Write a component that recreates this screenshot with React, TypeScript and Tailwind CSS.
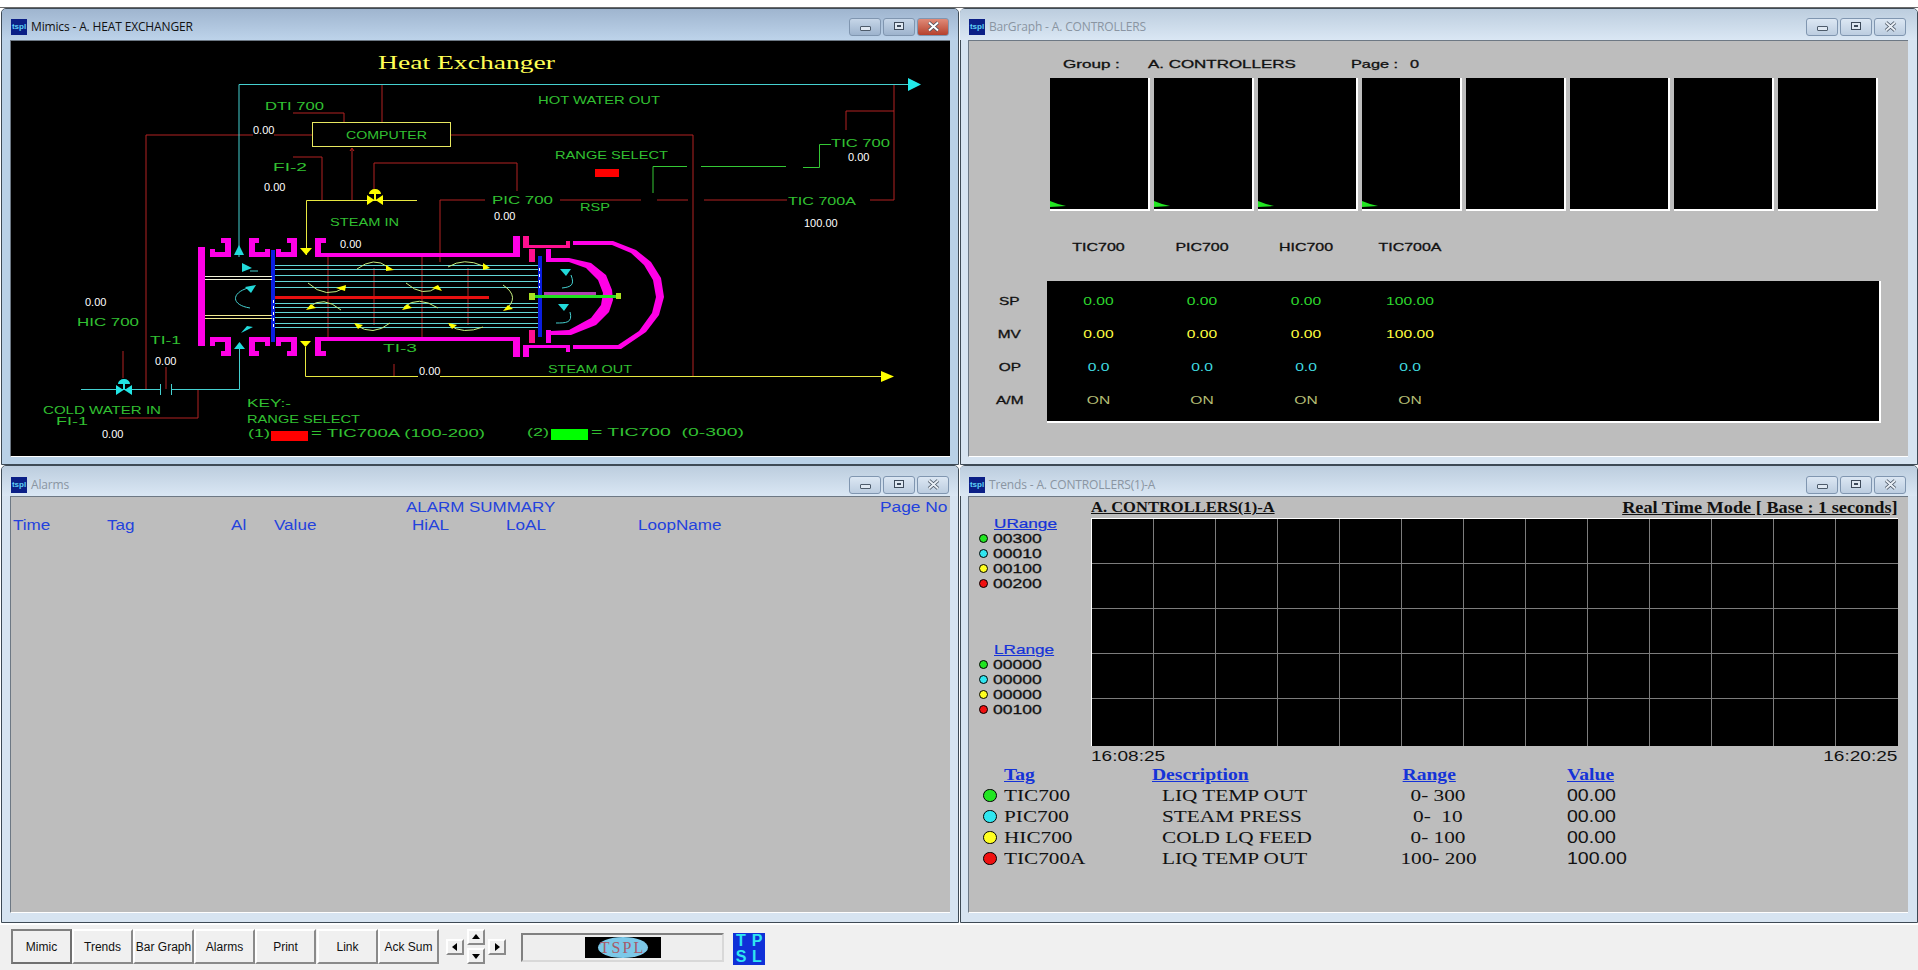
import type { ReactNode } from "react";

const SANS = "'Liberation Sans', Arial, sans-serif";

function Icon() {
  return (
    <div className="flex h-4 w-4 shrink-0 items-center justify-center overflow-hidden bg-[#0b1f86] font-['Liberation_Sans',sans-serif] text-[8px] font-bold leading-none text-[#5fd0f5]">
      tspl
    </div>
  );
}

function WinButtons({ active, close }: { active?: boolean; close?: boolean }) {
  const box = "flex h-[18px] w-[32px] items-center justify-center rounded-[3px] border border-[#8096b0] bg-gradient-to-b";
  const tone = active ? "from-[#c6d6e8] to-[#9db3cd]" : "from-[#dce7f3] to-[#bccde0]";
  return (
    <div className="flex gap-[2px]">
      <div className={`${box} ${tone}`}>
        <div className="mt-[4px] h-[5px] w-[11px] rounded-[1px] border border-[#4d5b6b] bg-[#dfe8f2]" />
      </div>
      <div className={`${box} ${tone}`}>
        <div className="mb-[1px] flex h-[8px] w-[10px] items-center justify-center border border-[#3d4a5a] bg-[#dfe8f2]">
          <div className="h-[2px] w-[4px] bg-[#3d4a5a]" />
        </div>
      </div>
      <div className={`${box} ${close ? "from-[#e08a78] to-[#b5402c]" : tone}`}>
        <svg width="13" height="11" viewBox="0 0 13 11">
          <path d="M2 1.500L11 9.500M11 1.500L2 9.500" stroke="#44505e" strokeWidth="3.600" />
          <path d="M2 1.500L11 9.500M11 1.500L2 9.500" stroke={close ? "#fff" : "#e8eef5"} strokeWidth="2" />
        </svg>
      </div>
    </div>
  );
}

function Window({
  title,
  active,
  right,
  lower,
  children,
}: {
  title: string;
  active?: boolean;
  right?: boolean;
  lower?: boolean;
  children: ReactNode;
}) {
  return (
    <div
      className={`flex w-[958px] flex-col rounded-t-[5px] border border-[#3e4a55] ${
        active ? "bg-[#b9d1e7]" : "bg-[#d7e4f1]"
      } ${right ? "pl-[7px] pr-[8px]" : "pl-[8px] pr-[8px]"} ${lower ? "h-[458px]" : "h-[457px]"}`}
    >
      <div
        className={`-mx-2 flex shrink-0 items-center justify-between rounded-t-[4px] bg-gradient-to-b pl-[9px] ${
          right ? "pr-[11px]" : "pr-[9px]"
        } ${active ? "from-[#9fb5cf] to-[#bdd3ea]" : "from-[#bccdde] to-[#dae7f4]"} ${lower ? "h-[30px] pt-[7px]" : "h-[31px] pt-[4px]"}`}
      >
        <div className="flex items-center gap-[4px]">
          <Icon />
          <span
            className={`font-['Open_Sans',sans-serif] text-[12px] tracking-[-0.15px] ${
              active ? "text-[#111]" : "text-[#8a95a2]"
            }`}
          >
            {title}
          </span>
        </div>
        <WinButtons active={active} close={active} />
      </div>
      <div className="h-[417px] w-[940px] shrink-0 overflow-hidden border-t border-l border-[#6d7884] border-b border-b-white">
        {children}
      </div>
    </div>
  );
}

function T({ x, y, w, children, c = "#32c032", s = 11 }: { x: number; y: number; w: number; children: string; c?: string; s?: number }) {
  return (
    <text x={x} y={y} fontFamily={SANS} fontSize={s} fill={c} textLength={w} lengthAdjust="spacingAndGlyphs" xmlSpace="preserve">
      {children}
    </text>
  );
}

function V({ x, y, children }: { x: number; y: number; children: string }) {
  return (
    <text x={x} y={y} fontFamily={SANS} fontSize={11} fill="#fff">
      {children}
    </text>
  );
}

const redLines = [
  "M381 84V122",
  "M292 113H343V122",
  "M145 389V135H252M273 135H311",
  "M450 135H692V376",
  "M292 157H321V200",
  "M351 200V149",
  "M373 190V163H516V191",
  "M439 262V200H484",
  "M559 200H640M656 200H687M703 200H786M869 200H893V84M845 130V111H893",
  "M122 351V378M165 367V389M197 389V418H118M393 364V376",
  "M327 257V337M373 268V325M421 257V337M467 268V325",
];

const tubes = [265, 269, 275, 281, 287, 303, 307, 312, 317, 323, 327];

const flowArcs = [
  "M356 269Q373 256 387 267",
  "M307 283Q325 300 345 287",
  "M447 267Q463 257 482 266",
  "M405 283Q422 298 437 287",
  "M340 310Q322 295 308 307",
  "M437 308Q417 295 403 307",
  "M389 323Q372 337 355 325",
  "M482 327Q462 335 448 325",
  "M502 285Q520 297 504 310",
];

const flowHeads = [
  "385,265 393,270 385,271",
  "345,285 344,291 335,288",
  "482,263 489,268 482,270",
  "437,285 441,291 431,288",
  "305,310 310,304 315,308",
  "401,310 406,304 411,308",
  "353,323 362,325 357,329",
  "447,323 456,325 451,329",
  "502,311 507,305 512,309",
];

function Mimic() {
  return (
    <svg width="940" height="416" viewBox="10 41 940 416" className="block bg-black">
      <text x="377" y="69" fontFamily="'Liberation Serif', serif" fontSize="19" fill="#ffff55" textLength="177" lengthAdjust="spacingAndGlyphs">
        Heat Exchanger
      </text>

      {redLines.map((d) => (
        <path key={d} d={d} fill="none" stroke="#b22222" strokeWidth="1" />
      ))}
      <path d="M349 151L351 148L353 151" fill="none" stroke="#c02020" />

      <path d="M238 257V84.500H908" fill="none" stroke="#45d0d0" />
      <polygon points="907,78 920,84.500 907,91" fill="#22eaea" />
      <path d="M80 389.500H159M170 389.500H238.500V349M159.500 384V395M170.500 384V395" fill="none" stroke="#45d0d0" />
      <polygon points="238,245 233,255 243,255" fill="#22dada" />
      <polygon points="238.500,342 233,349 244,349" fill="#22dada" />

      <rect x="311.500" y="122.500" width="138" height="24" fill="none" stroke="#e8e860" />
      <path d="M305.500 255V200.500H416M304.500 347V376.500H417M439 376.500H880" fill="none" stroke="#e8e840" />
      <polygon points="299,248 311,248 305,255" fill="#ffff00" />
      <polygon points="299,341 310,341 304.500,347" fill="#ffff00" />
      <polygon points="880,371 893,376.500 880,382" fill="#ffff00" />

      <path d="M652 193V166.500H686M700 166.500H785M802 167.500H818.500V144.500H830" fill="none" stroke="#35c835" />
      <rect x="594" y="169" width="24" height="8" fill="#ff0000" />
      <rect x="270" y="431" width="37" height="10" fill="#ff0000" />
      <rect x="550" y="429" width="37" height="11" fill="#00ff00" />

      {/* valves */}
      <path d="M366 195L373.500 200L366 205ZM382 195L374.500 200L382 205ZM373 200H375V194H373ZM368 194A6 5 0 0 1 380 194Z" fill="#ffff00" />
      <path d="M115 385L122.500 390L115 395ZM131 385L123.500 390L131 395ZM122 390H124V384H122ZM117 384A6 5 0 0 1 129 384Z" fill="#22e6e6" />

      {/* flanges and shell */}
      <g fill="#ff00e6">
        <rect x="197" y="247" width="7" height="99" />
        <polygon points="220,238 230,238 230,257 209,257 209,249 214,249 214,252 224,252 224,243 220,243" />
        <polygon points="248,238 258,238 258,243 254,243 254,252 264,252 264,249 269,249 269,257 248,257" />
        <polygon points="286,238 296,238 296,257 275,257 275,249 280,249 280,252 290,252 290,243 286,243" />
        <polygon points="314,238 325,238 325,243 320,243 320,253 512,253 512,236 519,236 519,257 314,257" />
        <polygon points="209,337 230,337 230,356 220,356 220,351 224,351 224,342 214,342 214,346 209,346" />
        <polygon points="248,337 269,337 269,346 264,346 264,342 254,342 254,351 258,351 258,356 248,356" />
        <polygon points="275,337 296,337 296,356 286,356 286,351 290,351 290,342 280,342 280,346 275,346" />
        <polygon points="314,337 519,337 519,357 512,357 512,341 320,341 320,351 325,351 325,356 314,356" />
        <polygon points="522,236 528,236 528,245 565,245 565,241 569,241 569,248 522,248" fill="#ff1090" />
        <polygon points="522,345 569,345 569,352 565,352 565,348 528,348 528,357 522,357" />
        <rect x="528" y="249" width="6" height="13" fill="#ff1090" />
        <rect x="528" y="330" width="6" height="13" fill="#ff1090" />
        <rect x="545" y="249" width="5" height="13" />
        <rect x="545" y="330" width="5" height="13" />
        <polygon points="572,241 612,241 635,250 650,262 660,278 663,297 658,315 645,332 620,349 572,349 572,345 617,345 638,331 651,313 655,297 652,280 643,265 630,253 611,245 572,245" />
        <polygon points="550,258 568,258 590,263 605,275 611,290 612,300 608,312 595,325 570,335 550,335 550,331 568,330 590,318 600,305 602,293 597,280 585,268 568,262 550,262" />
      </g>

      {tubes.map((y) => (
        <path key={y} d={`M272 ${y}.5H540`} stroke="#62d6d6" />
      ))}
      <rect x="273" y="296" width="215" height="3" fill="#e81010" />
      <rect x="270" y="250" width="4" height="92" fill="#0a1ee0" />
      <rect x="537" y="256" width="4" height="81" fill="#0a1ee0" />
      <path d="M204 276.500H271M204 279.500H271" stroke="#f0f0d8" />
      <path d="M204 315.500H271M204 318.500H271" stroke="#f0e890" />
      <path d="M272.500 300V330M538.500 268V288" stroke="#fff" strokeDasharray="3 3" />

      {flowArcs.map((d) => (
        <path key={d} d={d} fill="none" stroke="#c8f080" />
      ))}
      {flowHeads.map((p) => (
        <polygon key={p} points={p} fill="#ffff00" />
      ))}

      {/* cyan flow marks */}
      <g fill="#22dada">
        <polygon points="241,263 251,268 241,272" />
        <polygon points="244,287 255,285 250,293" />
        <polygon points="240,333 246,326 252,327" />
        <polygon points="559,269 570,269 565,276" />
        <polygon points="557,304 568,304 563,311" />
      </g>
      <g fill="none" stroke="#45d0d0">
        <path d="M249 271H257" />
        <path d="M247 288C230 293 230 305 249 308" />
        <path d="M570 275C574 285 570 287 561 288" />
        <path d="M569 312C572 323 565 323 555 323" />
      </g>

      <rect x="543" y="292" width="52" height="4" fill="#b040b0" />
      <rect x="530" y="295" width="90" height="3" fill="#20e020" />
      <rect x="528" y="293" width="6" height="7" fill="#a8e020" />
      <rect x="615" y="293" width="5" height="6" fill="#a8e020" />

      <T x={264} y={110} w={59}>DTI 700</T>
      <T x={345} y={139} w={81}>COMPUTER</T>
      <T x={272} y={171} w={34}>FI-2</T>
      <T x={329} y={226} w={69}>STEAM IN</T>
      <T x={537} y={104} w={122}>HOT WATER OUT</T>
      <T x={554} y={159} w={113}>RANGE SELECT</T>
      <T x={491} y={204} w={61}>PIC 700</T>
      <T x={579} y={211} w={30}>RSP</T>
      <T x={830} y={147} w={59}>TIC 700</T>
      <T x={787} y={205} w={68}>TIC 700A</T>
      <T x={76} y={326} w={62}>HIC 700</T>
      <T x={149} y={344} w={31}>TI-1</T>
      <T x={382} y={352} w={34}>TI-3</T>
      <T x={42} y={414} w={118}>COLD WATER IN</T>
      <T x={55} y={425} w={32}>FI-1</T>
      <T x={547} y={373} w={84}>STEAM OUT</T>
      <T x={246} y={407} w={44}>KEY:-</T>
      <T x={246} y={423} w={113}>RANGE SELECT</T>
      <T x={247} y={437} w={22}>(1)</T>
      <T x={310} y={437} w={174}>= TIC700A (100-200)</T>
      <T x={526} y={436} w={22}>(2)</T>
      <T x={590} y={436} w={153}>= TIC700  (0-300)</T>

      <V x={252} y={134}>0.00</V>
      <V x={263} y={191}>0.00</V>
      <V x={493} y={220}>0.00</V>
      <V x={847} y={161}>0.00</V>
      <V x={803} y={227}>100.00</V>
      <V x={339} y={248}>0.00</V>
      <V x={84} y={306}>0.00</V>
      <V x={154} y={365}>0.00</V>
      <V x={101} y={438}>0.00</V>
      <V x={418} y={375}>0.00</V>
    </svg>
  );
}

function Alarms() {
  return (
    <div className="h-full bg-[#bdbdbd] font-['Liberation_Sans',sans-serif] text-[14px] leading-[18px] text-[#2342dd]">
      <div className="relative h-[19px]">
        <span className="absolute left-[395px] top-[1px] inline-block origin-left scale-x-[1.21]">ALARM SUMMARY</span>
        <span className="absolute right-[3px] top-[1px] inline-block origin-right scale-x-[1.24]">Page No</span>
      </div>
      <div className="grid grid-cols-[94px_124px_43px_138px_94px_132px_1fr] pl-[2px]">
        {["Time", "Tag", "Al", "Value", "HiAL", "LoAL", "LoopName"].map((h) => (
          <span key={h} className="inline-block origin-left scale-x-[1.22]">{h}</span>
        ))}
      </div>
    </div>
  );
}

const barColumns = ["TIC700", "PIC700", "HIC700", "TIC700A"];
const bars = [true, true, true, true, false, false, false, false];
const barRows = [
  { label: "SP", color: "text-[#2ed82e]", values: ["0.00", "0.00", "0.00", "100.00"] },
  { label: "MV", color: "text-[#ffff40]", values: ["0.00", "0.00", "0.00", "100.00"] },
  { label: "OP", color: "text-[#40dce0]", values: ["0.0", "0.0", "0.0", "0.0"] },
  { label: "A/M", color: "text-[#b4bc74]", values: ["ON", "ON", "ON", "ON"] },
];

function BarGraph() {
  const ink = "inline-block [-webkit-text-stroke:0.3px_#111]";
  return (
    <div className="h-full bg-[#bdbdbd] font-['Liberation_Sans',sans-serif] text-[11px] leading-[14px] text-[#111]">
      <div className="relative h-[30px]">
        <span className={`${ink} absolute left-[94px] top-[16px] origin-left scale-x-[1.55]`}>Group :</span>
        <span className={`${ink} absolute left-[179px] top-[16px] origin-left scale-x-[1.54]`}>A. CONTROLLERS</span>
        <span className={`${ink} absolute left-[382px] top-[16px] origin-left scale-x-[1.48]`}>Page :</span>
        <span className={`${ink} absolute left-[441px] top-[16px] origin-left scale-x-[1.48]`}>0</span>
      </div>
      <div className="mt-[7px] flex gap-[4px] pl-[81px]">
        {bars.map((on, i) => (
          <div key={i} className="relative h-[133px] w-[100px] border-b-2 border-r-2 border-white bg-black">
            {on && (
              <svg width="17" height="6" viewBox="0 0 17 6" className="absolute bottom-[2px] left-0">
                <polygon points="0,0 8,3 16,5 0,6" fill="#22e622" />
              </svg>
            )}
          </div>
        ))}
      </div>
      <div className="mt-[29px] grid h-[14px] grid-cols-[103px_104px_104px_104px] pl-[78px] text-center">
        {barColumns.map((c) => (
          <span key={c} className={`${ink} scale-x-[1.45]`}>{c}</span>
        ))}
      </div>
      <div className="mt-[27px] flex">
        <div className="w-[78px] pl-[3px] pt-[3px] text-center">
          {barRows.map((r) => (
            <div key={r.label} className="flex h-[33px] items-center justify-center">
              <span className={`${ink} scale-x-[1.4]`}>{r.label}</span>
            </div>
          ))}
        </div>
        <div className="h-[142px] w-[834px] border-b-2 border-r-2 border-white bg-black pt-[3px]">
          {barRows.map((r) => (
            <div key={r.label} className={`grid h-[33px] grid-cols-[103px_104px_104px_104px] items-center text-center ${r.color}`}>
              {r.values.map((v, i) => (
                <span key={i} className="inline-block scale-x-[1.42]">{v}</span>
              ))}
            </div>
          ))}
        </div>
      </div>
    </div>
  );
}

function Dot({ color }: { color: string }) {
  return <span className={`h-[9px] w-[9px] rounded-full border border-black ${color}`} />;
}

const dotColors = ["bg-[#22e622]", "bg-[#30e6f0]", "bg-[#ffff20]", "bg-[#f01010]"];

function RangeBlock({ name, values, className }: { name: string; values: string[]; className?: string }) {
  return (
    <div className={className}>
      <div className="h-[15px] pl-[25px] leading-[15px]">
        <span className="inline-block origin-left scale-x-[1.32] text-[#1533d8] underline [-webkit-text-stroke:0.2px_#1533d8]">{name}</span>
      </div>
      {values.map((v, i) => (
        <div key={i} className="flex h-[15px] items-center gap-[5px] pl-[10px]">
          <Dot color={dotColors[i]} />
          <span className="inline-block origin-left scale-x-[1.35] text-[#111] [-webkit-text-stroke:0.3px_#111]">{v}</span>
        </div>
      ))}
    </div>
  );
}

const trendRows = [
  { tag: "TIC700", desc: "LIQ TEMP OUT", range: "0- 300", value: "00.00", dot: "bg-[#22e622]" },
  { tag: "PIC700", desc: "STEAM PRESS", range: "0-  10", value: "00.00", dot: "bg-[#30e6f0]" },
  { tag: "HIC700", desc: "COLD LQ FEED", range: "0- 100", value: "00.00", dot: "bg-[#ffff20]" },
  { tag: "TIC700A", desc: "LIQ TEMP OUT", range: "100- 200", value: "100.00", dot: "bg-[#f01010]" },
];

const cells = Array.from({ length: 65 }, (_, i) => i);

function Trends() {
  const head = "inline-block origin-left scale-x-[1.15] font-bold text-[#1533d8] underline";
  const cell = "inline-block origin-left scale-x-[1.25]";
  return (
    <div className="h-full bg-[#bdbdbd] font-['Liberation_Serif',serif] text-[#111]">
      <div className="flex h-[21px] items-center justify-between pl-[122px] pr-[10px] text-[14px] font-bold underline">
        <span className="inline-block origin-left scale-x-[1.18]">A. CONTROLLERS(1)-A</span>
        <span className="inline-block origin-right scale-x-[1.14] text-[16px]">Real Time Mode [ Base : 1 seconds]</span>
      </div>
      <div className="flex">
        <div className="w-[122px] font-['Liberation_Sans',sans-serif] text-[13px]">
          <RangeBlock name="URange" values={["00300", "00010", "00100", "00200"]} className="-mt-[2px]" />
          <RangeBlock name="LRange" values={["00000", "00000", "00000", "00100"]} className="mt-[51px]" />
        </div>
        <div className="grid h-[228px] w-[807px] grid-cols-[repeat(13,62px)] grid-rows-[45px_45px_45px_45px_47px] border-l border-t border-white bg-black">
          {cells.map((i) => (
            <div
              key={i}
              className={`border-[#7c7c7c] ${i % 13 < 12 ? "border-r" : ""} ${i < 52 ? "border-b" : ""}`}
            />
          ))}
        </div>
      </div>
      <div className="flex h-[20px] items-center justify-between pl-[122px] pr-[11px] font-['Liberation_Sans',sans-serif] text-[15px]">
        <span className="inline-block origin-left scale-x-[1.27]">16:08:25</span>
        <span className="inline-block origin-right scale-x-[1.27]">16:20:25</span>
      </div>
      <div className="-mt-[2px] grid grid-cols-[35px_148px_246px_80px_89px_1fr] text-[17px] leading-[21px]">
        <span />
        <span className={head}>Tag</span>
        <span className={head}>Description</span>
        <span className={`${head} pl-[4px]`}>Range</span>
        <span />
        <span className={head}>Value</span>
        {trendRows.map((r) => (
          <div key={r.tag} className="contents">
            <span className="flex items-center pl-[14px]">
              <span className={`h-[13px] w-[14px] rounded-full border border-black ${r.dot}`} />
            </span>
            <span className={cell}>{r.tag}</span>
            <span className="pl-[10px]">
              <span className={cell}>{r.desc}</span>
            </span>
            <span className="text-center">
              <span className="inline-block scale-x-[1.25] whitespace-pre">{r.range}</span>
            </span>
            <span />
            <span className="font-['Liberation_Sans',sans-serif]">
              <span className="inline-block origin-left scale-x-[1.15]">{r.value}</span>
            </span>
          </div>
        ))}
      </div>
    </div>
  );
}

const taskButtons = ["Mimic", "Trends", "Bar Graph", "Alarms", "Print", "Link", "Ack Sum"];

function Arrow({ d, className }: { d: string; className: string }) {
  return (
    <div className={`flex items-center justify-center border-2 border-white border-b-[#8a8a8a] border-r-[#8a8a8a] bg-[#f0f0f0] ${className}`}>
      <svg width="8" height="8" viewBox="0 0 8 8">
        <polygon points={d} fill="#000" />
      </svg>
    </div>
  );
}

function Taskbar() {
  return (
    <div className="flex h-[47px] items-start border-t-2 border-white bg-[#f0f0f0] pl-[11px] pt-[4px] font-['Liberation_Sans',sans-serif]">
      <div className="flex">
        {taskButtons.map((b, i) => (
          <div
            key={b}
            className={`flex h-[35px] w-[61px] items-center justify-center whitespace-nowrap border-2 text-[12px] text-[#111] ${
              i === 0 ? "border-[#707070] border-l-[#808080] border-t-[#808080]" : "border-white border-b-[#8a8a8a] border-r-[#8a8a8a]"
            } ${i === 5 ? "ml-[1px]" : ""}`}
          >
            {b}
          </div>
        ))}
      </div>
      <div className="ml-[7px] flex items-center gap-[3px]">
        <Arrow d="6,0 6,8 1,4" className="h-[16px] w-[18px]" />
        <div className="flex flex-col gap-[3px]">
          <Arrow d="0,6 8,6 4,1" className="h-[16px] w-[18px]" />
          <Arrow d="0,2 8,2 4,7" className="h-[16px] w-[18px]" />
        </div>
        <Arrow d="2,0 2,8 7,4" className="h-[16px] w-[18px]" />
      </div>
      <div className="ml-[15px] mt-[4px] flex h-[29px] w-[203px] items-center justify-center border-2 border-[#d8d8d8] border-t-[#808080] border-l-[#808080] bg-[#eeeeee]">
        <div className="relative flex h-[21px] w-[76px] items-center justify-center bg-black">
          <div className="flex h-[21px] w-[50px] items-center justify-center rounded-[50%] bg-[#7cc8e8] font-['Liberation_Serif',serif] text-[16px] tracking-[2px] text-[#a85a68]">
            TSPL
          </div>
        </div>
      </div>
      <div className="ml-[9px] mt-[4px] grid h-[32px] w-[32px] grid-cols-2 bg-[#1030d8] text-center text-[16px] font-bold leading-[16px] text-[#30e6f0]">
        <span>T</span>
        <span>P</span>
        <span>S</span>
        <span>L</span>
      </div>
    </div>
  );
}

export default function App() {
  return (
    <div className="flex h-[970px] w-[1918px] flex-col overflow-hidden bg-white">
      <div className="h-[8px] shrink-0 border-b border-[#6a6a6a]" />
      <div className="flex shrink-0 gap-[1px] pl-[1px]">
        <Window title="Mimics - A. HEAT EXCHANGER" active>
          <Mimic />
        </Window>
        <Window title="BarGraph - A. CONTROLLERS" right>
          <BarGraph />
        </Window>
      </div>
      <div className="flex shrink-0 gap-[1px] pl-[1px]">
        <Window title="Alarms" lower>
          <Alarms />
        </Window>
        <Window title="Trends - A. CONTROLLERS(1)-A" right lower>
          <Trends />
        </Window>
      </div>
      <Taskbar />
    </div>
  );
}
